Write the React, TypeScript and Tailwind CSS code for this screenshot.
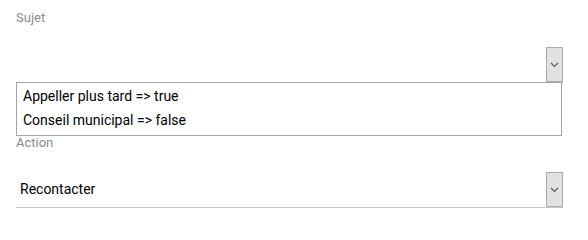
import React from "react";

function Chevron() {
  return (
    <svg width="9" height="6" viewBox="0 0 9 6" className="block">
      <polyline points="1,1 4.5,4.5 8,1" fill="none" stroke="#555" strokeWidth="1.1" />
    </svg>
  );
}

function SelectBox({ value }: { value?: string }) {
  return (
    <div className="flex items-stretch pt-[22px] border-b border-[#c8c8c8]">
      <div className="flex-1 h-[35px] flex items-center pl-[4px] text-[14px] text-[#000]">{value}</div>
      <div className="w-[17px] h-[35px] bg-[#e1e1e1] border border-[#acacac] flex items-center justify-center">
        <Chevron />
      </div>
    </div>
  );
}

export default function App() {
  return (
    <div className="w-[588px] h-[238px] bg-white" style={{ fontFamily: "Roboto, 'Liberation Sans', sans-serif" }}>
      <div className="ml-[16px] w-[547px] pt-[11px]">
        <div className="text-[13px] leading-[14px] text-[#8a8a8a]">Sujet</div>
        <SelectBox />
        <div className="-mt-px w-[546px] border border-[#a5a5a5] bg-white pt-[1px] pb-[3px]">
          <div className="h-[24px] leading-[24px] pl-[6px] text-[14px] text-[#000]">Appeller plus tard =&gt; true</div>
          <div className="h-[24px] leading-[24px] pl-[6px] text-[14px] text-[#000]">Conseil municipal =&gt; false</div>
        </div>
        <div className="text-[13px] leading-[14px] text-[#8a8a8a]">Action</div>
        <SelectBox value="Recontacter" />
      </div>
    </div>
  );
}
